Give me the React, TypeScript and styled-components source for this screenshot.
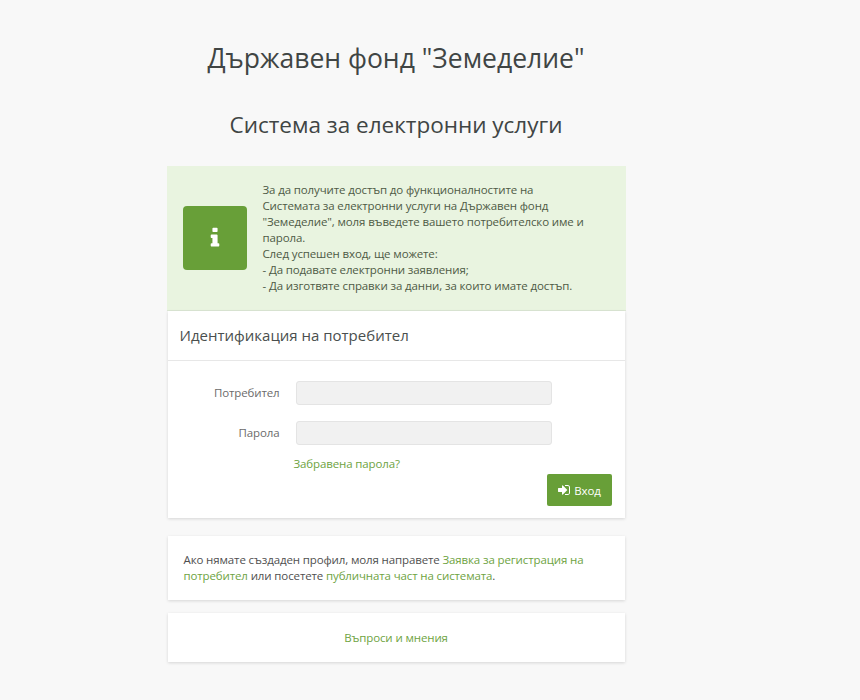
import React from "react";
import styled, { createGlobalStyle } from "styled-components";

const Global = createGlobalStyle`
  html, body { margin: 0; padding: 0; background: #f8f8f8; }
  body { font-family: "Open Sans", "Noto Sans", sans-serif; font-size: 11.5px; letter-spacing: -0.125px; color: #4f4f4f; }
  * { box-sizing: border-box; }
`;

const Page = styled.div`
  width: 792px;
  height: 700px;
  overflow: hidden;
  display: flex;
  flex-direction: column;
  align-items: center;
`;

const Title = styled.h1`
  margin: 38px 0 0;
  font-size: 26.5px;
  line-height: 40px;
  font-weight: 400;
  letter-spacing: 0;
  color: #404544;
`;

const Subtitle = styled.h2`
  margin: 31px 0 0;
  font-size: 22.5px;
  line-height: 32px;
  font-weight: 400;
  letter-spacing: 0;
  color: #404544;
`;

const Column = styled.div`
  width: 459px;
  margin-top: 25px;
  display: flex;
  flex-direction: column;
`;

const Alert = styled.div`
  height: 145px;
  background: #e9f4e0;
  border-bottom: 1px solid #dde8d5;
  padding: 0 16px;
  display: flex;
  align-items: center;
  gap: 15px;
`;

const AlertIcon = styled.div`
  width: 64px;
  height: 64px;
  flex: none;
  border-radius: 4px;
  background: #689f38;
  color: #fff;
  display: flex;
  align-items: center;
  justify-content: center;
`;

const AlertText = styled.div`
  width: 326px;
  margin-left: 1px;
  line-height: 16px;
  color: #4e5a45;
`;

const Card = styled.section<{ $mt?: number }>`
  background: #fff;
  margin: ${(p) => p.$mt ?? 0}px 1px 0;
  box-shadow: 0 1px 3px rgba(0, 0, 0, 0.14);
`;

const CardHeader = styled.div`
  height: 50px;
  padding: 0 12px 2px;
  display: flex;
  align-items: center;
  border-bottom: 1px solid #e7e7e7;
  font-size: 15px;
  letter-spacing: 0;
  color: #4a4f4e;
`;

const Form = styled.form`
  height: 157px;
  padding: 20px 13px 0 12px;
  display: flex;
  flex-direction: column;
`;

const Row = styled.div`
  display: flex;
  align-items: center;
  margin-bottom: 16px;
`;

const Label = styled.label`
  width: 100px;
  padding-bottom: 2px;
  text-align: right;
  color: #6b6b6b;
`;

const Input = styled.div`
  width: 256px;
  height: 24px;
  margin-left: 16px;
  background: #f1f1f1;
  border: 1px solid #e4e4e4;
  border-radius: 3px;
`;

const Forgot = styled.a`
  margin: -5px 0 0 114px;
  color: #6ea33f;
  line-height: 16px;
`;

const Actions = styled.div`
  display: flex;
  justify-content: flex-end;
  margin-top: 2px;
`;

const Button = styled.button`
  width: 65px;
  height: 32px;
  padding: 0;
  border: 0;
  border-radius: 2px;
  background: #689f38;
  color: #fff;
  font: inherit;
  letter-spacing: inherit;
  display: flex;
  align-items: center;
  justify-content: center;
  gap: 3px;
`;

const Info = styled.div`
  height: 64px;
  padding: 16px 16px 0;
  line-height: 16px;
  color: #4f4f4f;
`;

const Link = styled.a`
  color: #6ea33f;
`;

const Center = styled.div`
  height: 49px;
  display: flex;
  align-items: center;
  justify-content: center;
`;

const InfoIcon = () => (
  <svg width="24" height="24" viewBox="0 0 1792 1792" fill="currentColor" aria-hidden="true">
    <path d="M1216 1344v128q0 26-19 45t-45 19h-512q-26 0-45-19t-19-45v-128q0-26 19-45t45-19h64v-384h-64q-26 0-45-19t-19-45v-128q0-26 19-45t45-19h384q26 0 45 19t19 45v576h64q26 0 45 19t19 45zm-128-1152v192q0 26-19 45t-45 19h-256q-26 0-45-19t-19-45v-192q0-26 19-45t45-19h256q26 0 45 19t19 45z" />
  </svg>
);

const SignInIcon = () => (
  <svg width="14" height="14" viewBox="0 0 1792 1792" fill="currentColor" aria-hidden="true">
    <path d="M1312 896q0 26-19 45l-544 544q-19 19-45 19t-45-19-19-45v-288h-448q-26 0-45-19t-19-45v-384q0-26 19-45t45-19h448v-288q0-26 19-45t45-19 45 19l544 544q19 19 19 45zm352-352v704q0 119-84.5 203.5t-203.5 84.5h-320q-13 0-22.5-9.5t-9.5-22.5q0-4-1-20t-.5-26.5 3-23.5 10-19.5 20.5-6.5h320q66 0 113-47t47-113v-704q0-66-47-113t-113-47h-312l-11.5-1-11.5-3-8-5.5-7-9-2-13.5q0-4-1-20t-.5-26.5 3-23.5 10-19.5 20.5-6.5h320q119 0 203.5 84.5t84.5 203.5z" />
  </svg>
);

export default function App() {
  return (
    <>
      <Global />
      <Page>
        <Title>Държавен фонд "Земеделие"</Title>
        <Subtitle>Система за електронни услуги</Subtitle>
        <Column>
          <Alert>
            <AlertIcon><InfoIcon /></AlertIcon>
            <AlertText>
              За да получите достъп до функционалностите на Системата за електронни услуги на Държавен фонд "Земеделие", моля въведете вашето потребителско име и парола.
              <br />След успешен вход, ще можете:
              <br />- Да подавате електронни заявления;
              <br />- Да изготвяте справки за данни, за които имате достъп.
            </AlertText>
          </Alert>
          <Card>
            <CardHeader>Идентификация на потребител</CardHeader>
            <Form>
              <Row><Label>Потребител</Label><Input /></Row>
              <Row><Label>Парола</Label><Input /></Row>
              <Forgot>Забравена парола?</Forgot>
              <Actions><Button type="button"><SignInIcon />Вход</Button></Actions>
            </Form>
          </Card>
          <Card $mt={18}>
            <Info>
              Ако нямате създаден профил, моля направете <Link>Заявка за регистрация на</Link>
              <br />
              <Link>потребител</Link> или посетете <Link>публичната част на системата</Link>.
            </Info>
          </Card>
          <Card $mt={13}>
            <Center><Link>Въпроси и мнения</Link></Center>
          </Card>
        </Column>
      </Page>
    </>
  );
}
